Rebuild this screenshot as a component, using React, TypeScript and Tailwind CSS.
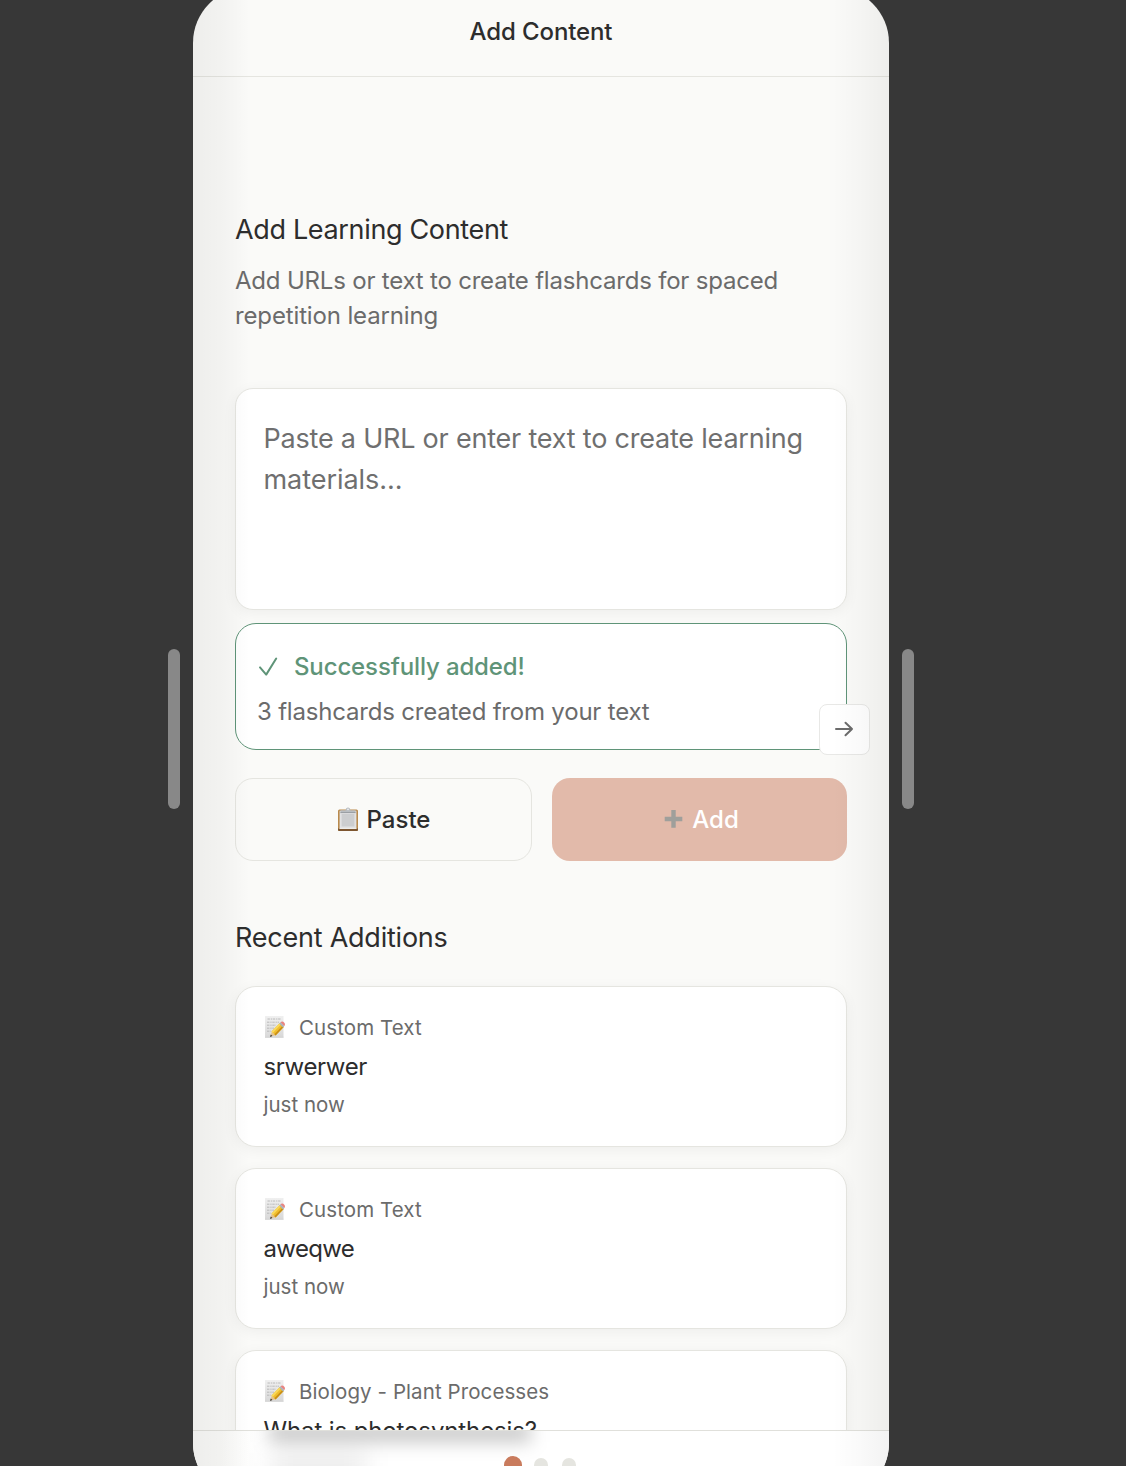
import type { ReactNode } from "react";

function MemoIcon() {
  return (
    <svg width="22" height="24" viewBox="0 0 22 24" className="mb-[2px] shrink-0">
      <defs>
        <linearGradient id="paper" x1="0" y1="0" x2="0" y2="1">
          <stop offset="0" stopColor="#f0f0f0" />
          <stop offset="1" stopColor="#d8d8d8" />
        </linearGradient>
      </defs>
      <rect x="1" y="1" width="18.5" height="21.5" fill="url(#paper)" />
      <path d="M1 22.3h18.500" stroke="#cfcfcf" strokeWidth="0.8" />
      <path
        d="M3.5 4h13M3 7.2h12M3 10.2h9M3 13.2h7M3 16.2h4"
        stroke="#b4b4b4"
        strokeWidth="0.9"
        strokeDasharray="2.4 0.9 1.3 0.7"
      />
      <path d="M6.200 21.600l1.600-5.200 3.800 3.800z" fill="#e3c28f" />
      <path d="M6 21.900l.800-2.300 1.600 1.500z" fill="#333" />
      <path d="M7.500 16.600l8.300-8.600 3.900 4.100-8.100 8.500z" fill="#f0bd2d" />
      <path d="M7.500 16.600l8.300-8.600 1.300 1.300-8.300 8.700z" fill="#f9d95c" />
      <path d="M10.400 19.300l8.100-8.500 1.200 1.300-8.100 8.500z" fill="#c98f17" />
      <path d="M15.200 8.600l1.400-1.400 3.800 3.900-1.400 1.500z" fill="#a9b4bd" />
      <path d="M16.500 7.300c1.100-1.100 2.600-.9 3.600.1s1.300 2.500.2 3.600z" fill="#e98480" />
    </svg>
  );
}

function ClipboardIcon() {
  return (
    <svg width="22" height="26" viewBox="0 0 22 26" className="mb-[2px] shrink-0">
      <rect x="1" y="3.5" width="20" height="21.5" rx="1.5" fill="#b98a4d" />
      <path d="M1 22.6h20v1.100q0 1.300-1.300 1.300H2.300Q1 25 1 23.700z" fill="#7d5630" />
      <rect x="2.6" y="4.8" width="16.8" height="18" fill="#e2e2e3" />
      <rect x="4.6" y="8" width="12.8" height="12.5" fill="#cccdcf" />
      <path d="M2.6 22.4h16.8" stroke="#f4f4f4" strokeWidth="0.9" />
      <path d="M3.400 6.600V4.200h5.300C8.700 2.500 9.600 1.500 11 1.500s2.300 1 2.300 2.700h5.300v2.400z" fill="#b9bdc1" />
      <path d="M3.400 6.600h15.200" stroke="#909498" strokeWidth="0.9" />
      <circle cx="11" cy="3.3" r="0.9" fill="#eef0f4" />
    </svg>
  );
}

function Card({ source, title, time }: { source: string; title: ReactNode; time?: string }) {
  return (
    <article className="h-[161px] shrink-0 rounded-[21px] border border-[#e5e5e0] bg-white pt-[25px] pl-[27.5px] shadow-[0_3px_14px_rgba(0,0,0,0.05)]">
      <div className="flex h-8 items-center gap-[13.5px] text-[20.5px] tracking-[0.09px] text-[#6b6b6b]">
        <MemoIcon />
        <span>{source}</span>
      </div>
      <div className="mt-[4px] h-[38px] text-[24px] leading-[38px] tracking-[-0.4px] text-[#2d2d2d]">{title}</div>
      {time && <div className="mt-[3px] h-8 text-[20.5px] leading-8 text-[#6b6b6b]">{time}</div>}
    </article>
  );
}

function Handle() {
  return <div className="mt-[649px] h-40 w-3 shrink-0 rounded-full bg-[#888888]" />;
}

export default function App() {
  return (
    <div className="flex h-[1466px] w-[1126px] items-start gap-[13px] overflow-hidden bg-[#373737] pl-[168px] font-['Inter',sans-serif] antialiased">
      <Handle />
      <main className="relative -mt-[13px] flex h-[1512px] w-[696px] shrink-0 flex-col overflow-hidden rounded-[56px] bg-[#fafaf8]">
        <header className="flex h-[90px] shrink-0 items-center justify-center border-b border-[#e5e5e0]">
          <h1 className="text-[24px] font-medium tracking-[-0.12px] text-[#2d2d2d]">Add Content</h1>
        </header>

        <div className="h-[1353px] shrink-0 overflow-hidden px-[42px] pt-[133px]">
          <h2 className="h-10 text-[27px] leading-10 tracking-[-0.34px] text-[#2d2d2d]">Add Learning Content</h2>
          <p className="mt-[13px] text-[24px] leading-[35px] tracking-[-0.2px] text-[#6b6b6b]">
            Add URLs or text to create flashcards for spaced
            <br />
            <span className="tracking-[-0.14px]">repetition learning</span>
          </p>

          <div className="mt-[55px] h-[222px] rounded-[18px] border border-[#e5e5e0] bg-white pt-[29px] pl-[27.5px] text-[27px] leading-[41px] tracking-[-0.21px] text-[#6f6f6f] shadow-[0_3px_14px_rgba(0,0,0,0.05)]">
            Paste a URL or enter text to create learning
            <br />
            <span className="tracking-[-0.05px]">materials...</span>
          </div>

          <section className="relative mt-[13px] h-[127px] rounded-[21px] border border-[#5f9478] bg-white pt-[25px] pl-[21px]">
            <div className="flex h-[35px] items-center text-[24px] font-medium tracking-[-0.13px] text-[#5f9478]">
              <svg
                width="37"
                height="24"
                viewBox="0 0 37 24"
                fill="none"
                stroke="currentColor"
                strokeWidth="2"
                strokeLinecap="round"
                strokeLinejoin="round"
              >
                <path d="M3 12.4l6.200 7.200L19.200 3.500" />
              </svg>
              Successfully added!
            </div>
            <p className="mt-[10px] h-[35px] text-[24px] leading-[35px] tracking-[-0.2px] text-[#6b6b6b]">
              3 flashcards created from your text
            </p>
            <button className="absolute top-[79.500px] -right-[23.500px] flex h-[51px] w-[51px] items-center justify-center rounded-[8px] border-[1.5px] border-[#e8e8e6] bg-white text-[#6b6b6b]">
              <svg
                width="20"
                height="18"
                viewBox="0 0 20 18"
                fill="none"
                stroke="currentColor"
                strokeWidth="2"
                strokeLinecap="round"
                strokeLinejoin="round"
              >
                <path d="M2 9h16M11.5 2.8L18 9l-6.500 6.200" />
              </svg>
            </button>
          </section>

          <div className="mt-[28px] flex h-[83px] gap-5">
            <button className="flex w-[297px] items-center justify-center gap-2 rounded-[18px] border border-[#e5e5e0] text-[24px] font-medium text-[#2d2d2d]">
              <ClipboardIcon />
              Paste
            </button>
            <button className="flex flex-1 items-center justify-center gap-[9px] rounded-[18px] bg-[#e2baaa] pl-[4px] text-[24px] font-medium text-white">
              <svg width="19" height="20" viewBox="0 0 19 20" className="mb-[2px]">
                <path d="M7.3 1h4.400v6.800h6.600v4.400h-6.600v6.600H7.300v-6.600H.7V7.800h6.600z" fill="#9f9f9b" />
              </svg>
              Add
            </button>
          </div>

          <h2 className="mt-[57px] h-10 text-[27px] leading-10 tracking-[-0.23px] text-[#2d2d2d]">Recent Additions</h2>
          <div className="mt-[28px] flex flex-col gap-[21px]">
            <Card source="Custom Text" title="srwerwer" time="just now" />
            <Card source="Custom Text" title={<span className="tracking-[-0.65px]">aweqwe</span>} time="just now" />
            <Card
              source="Biology - Plant Processes"
              title={<span className="tracking-[-0.12px]">What is photosynthesis?</span>}
            />
          </div>
        </div>

        <footer className="relative h-[69px] shrink-0 overflow-hidden border-t border-[#e0e0db] bg-linear-to-r from-[#fafaf8] from-4% via-white via-10% to-white">
          <div className="absolute -top-[8px] left-[76px] h-[19px] w-[262px] bg-black/22 blur-[9px]" />
          <div className="absolute top-[22px] left-[78px] h-[30px] w-[95px] bg-black/8 blur-[12px]" />
          <div className="relative flex items-start gap-[14px] pt-[25px] pl-[311px]">
            <span className="-mr-[2px] h-[18px] w-[18px] rounded-full bg-[#c97b5d]" />
            <span className="mt-[2px] h-[14px] w-[14px] rounded-full bg-[#e5e5e0]" />
            <span className="mt-[2px] h-[14px] w-[14px] rounded-full bg-[#e5e5e0]" />
          </div>
        </footer>

        <div className="pointer-events-none absolute inset-y-0 left-0 w-[60px] bg-linear-to-r from-black/5 via-black/3 via-50% to-transparent to-95%" />
        <div className="pointer-events-none absolute inset-y-0 right-0 w-[60px] bg-linear-to-l from-black/5 via-black/2 via-50% to-transparent to-95%" />
      </main>
      <Handle />
    </div>
  );
}
